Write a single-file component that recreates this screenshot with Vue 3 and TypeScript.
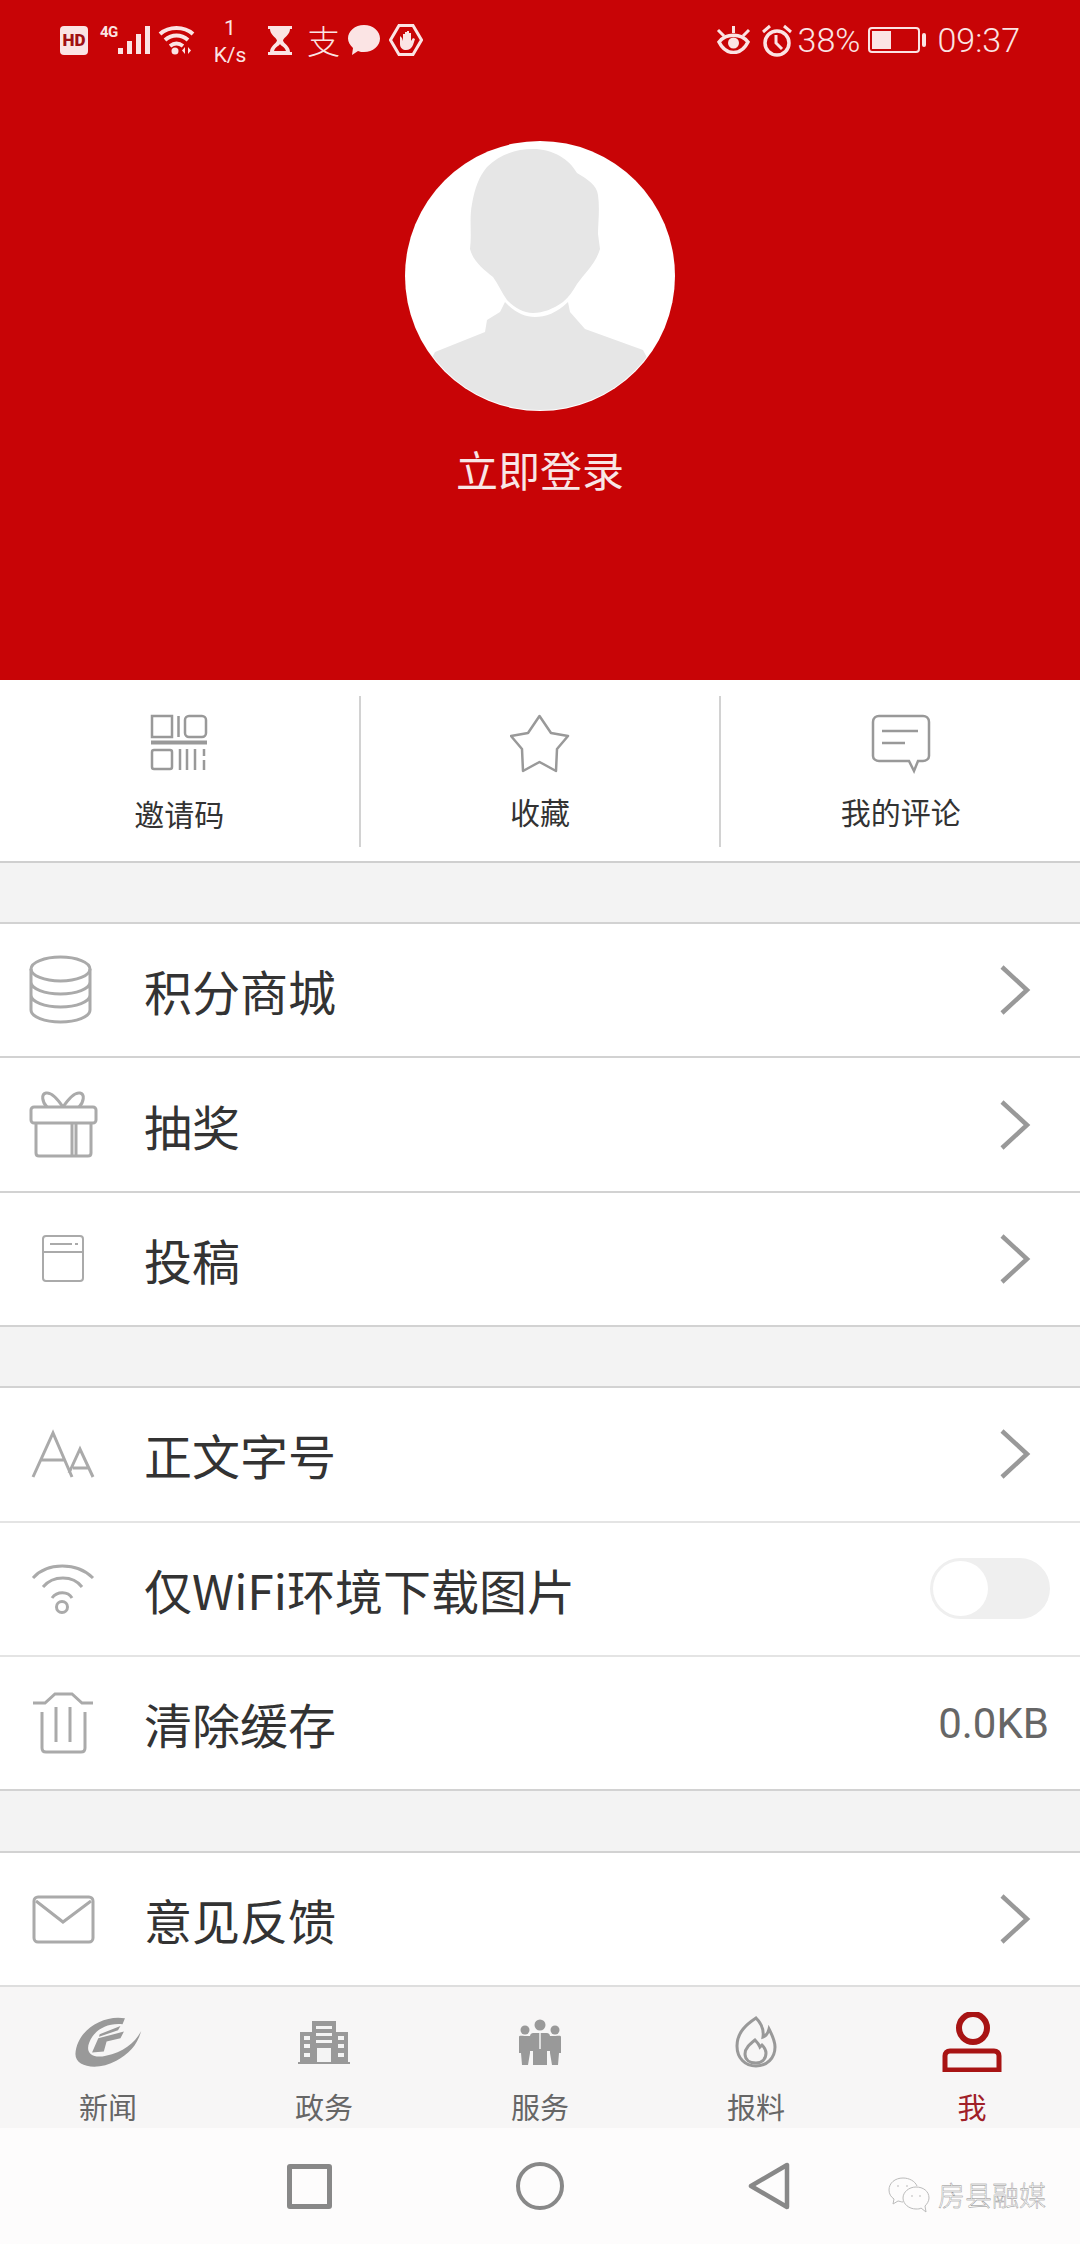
<script setup lang="ts">
import { ref } from "vue";

interface IRow {
    icon: string;
    label: string;
    value?: string;
    toggle?: boolean;
}

const wifiOnly = ref(false);

const quickLinks = [
    { icon: "qr", label: "邀请码", nudge: true },
    { icon: "star", label: "收藏", nudge: false },
    { icon: "comment", label: "我的评论", nudge: false },
];

const groups: IRow[][] = [
    [
        { icon: "coins", label: "积分商城" },
        { icon: "gift", label: "抽奖" },
        { icon: "draft", label: "投稿" },
    ],
    [
        { icon: "font", label: "正文字号" },
        { icon: "wifi", label: "仅WiFi环境下载图片", toggle: true },
        { icon: "trash", label: "清除缓存", value: "0.0KB" },
    ],
    [{ icon: "mail", label: "意见反馈" }],
];

const tabs = [
    { icon: "news", label: "新闻" },
    { icon: "gov", label: "政务" },
    { icon: "service", label: "服务" },
    { icon: "report", label: "报料" },
    { icon: "me", label: "我" },
];
</script>

<template>
    <div class="page">
        <header class="hero">
            <div class="status">
                <div class="status-left">
                    <span class="hd">HD</span>
                    <span class="net">4G</span>
                    <svg class="signal" width="33" height="28" viewBox="0 0 33 28">
                        <rect x="0" y="22" width="5" height="6" />
                        <rect x="9" y="15" width="5" height="13" />
                        <rect x="18" y="8" width="5" height="20" />
                        <rect x="27" y="0" width="5" height="28" />
                    </svg>
                    <svg class="wifi-mini" width="37" height="30" viewBox="0 0 37 30">
                        <path d="M2 9C11 1 26 1 35 9M7 15c7-6 16-6 23 0M12 21c4-3 9-3 13 0" fill="none" stroke="currentColor" stroke-width="4" />
                        <circle cx="17" cy="26" r="3.500" fill="currentColor" />
                        <path d="M27 22v7l-3-3.500zM30 22v7l3-3.500z" fill="currentColor" />
                    </svg>
                    <span class="speed"><span>1</span><span>K/s</span></span>
                    <svg class="glass" width="24" height="29" viewBox="0 0 24 29">
                        <path d="M0 0h24v3h-2c0 6-6 8-7 11.500 1 3.500 7 5.500 7 11.500h2v3H0v-3h2c0-6 6-8 7-11.500C8 11 2 9 2 3H0z" fill="currentColor" />
                        <path d="M6 25c1-4 5-5 6-7 1 2 5 3 6 7z" fill="#c80406" />
                    </svg>
                    <span class="alipay">支</span>
                    <svg class="bubble" width="32" height="30" viewBox="0 0 32 30">
                        <path d="M16 0c9 0 16 6 16 13.500S25 27 16 27c-2 0-4 0-6-1l-6 4 1-7C2 20 0 17 0 13.500 0 6 7 0 16 0z" fill="currentColor" />
                    </svg>
                    <svg class="hand" width="34" height="32" viewBox="0 0 34 32">
                        <path d="M10 1.500h14L32.500 16 24 30.500H10L1.500 16z" fill="none" stroke="currentColor" stroke-width="3" />
                        <path d="M11 12v8c0 4 3 6 6 6s6-2 7-5l2-6-2-1-2 3V9h-2v6-8h-2v8-7h-2v9-7h-2v7l-1-3z" fill="currentColor" />
                    </svg>
                </div>
                <div class="status-right">
                    <svg class="eye" width="35" height="28" viewBox="0 0 35 28">
                        <path d="M3 16c7-9 22-9 29 0-7 14-22 14-29 0z" fill="none" stroke="currentColor" stroke-width="3.500" />
                        <circle cx="17.500" cy="17" r="5.500" fill="currentColor" />
                        <path d="M2 4l6 6M33 4l-6 6M17.500 0v7" stroke="currentColor" stroke-width="3" />
                    </svg>
                    <svg class="alarm" width="32" height="33" viewBox="0 0 32 33">
                        <circle cx="16" cy="19" r="12" fill="none" stroke="currentColor" stroke-width="3.500" />
                        <path d="M15 11v8l6 6M2 8l7-6M30 8l-7-6" fill="none" stroke="currentColor" stroke-width="3" />
                    </svg>
                    <span class="pct">38%</span>
                    <span class="battery"><span class="battery-fill"></span></span>
                    <span class="battery-nub"></span>
                    <span class="clock">09:37</span>
                </div>
            </div>
            <svg class="avatar" width="270" height="270" viewBox="0 0 270 270">
                <defs>
                    <clipPath id="avatar-clip"><circle cx="135" cy="135" r="134" /></clipPath>
                </defs>
                <circle cx="135" cy="135" r="135" fill="#fff" />
                <g clip-path="url(#avatar-clip)" fill="#e6e6e6">
                    <path d="M128 8C148 8 164 18 172 32C182 38 192 44 193 54C195 68 193 82 193 93L195 108C191 122 180 132 172 143C168 150 164 156 158 161C148 168 138 172 128 172C118 172 109 166 102 159C97 152 93 143 88 136C78 128 68 120 65 108C67 92 64 78 67 63C70 46 74 36 82 26C94 14 110 8 128 8Z" />
                    <path d="M100 161C110 172 120 176 130 176C140 176 152 172 163 161L165 171L180 188L238 209L270 270H0L30 211L80 191L82 179L95 171Z" />
                </g>
            </svg>
            <div class="login">立即登录</div>
        </header>

        <section class="quick">
            <div v-for="link in quickLinks" :key="link.icon" class="quick-item" :class="{ nudge: link.nudge }">
                <svg class="quick-icon" width="60" height="60" viewBox="0 0 60 60">
                    <template v-if="link.icon === 'qr'">
                        <rect x="3" y="2" width="20" height="21" />
                        <rect x="36" y="2" width="21" height="21" rx="4" />
                        <path d="M29.500 2v21" />
                        <path d="M2 28.500h56" stroke-width="4" />
                        <rect x="3" y="36" width="20" height="19" rx="2" />
                        <path d="M31 35v21M38 35v21M46 35v21M55 35v7M55 46v10" />
                    </template>
                    <path
                        v-else-if="link.icon === 'star'"
                        d="M29.500 2L41 19L58 22L47 35L46 57L29.500 48L13 57L12 35L1 22L18 19Z"
                        stroke-linejoin="round"
                    />
                    <template v-else>
                        <path d="M8 2H52C55 2 58 4 58 8V42C58 45 55 47 52 47H47L43 57L38 47H8C5 47 2 45 2 42V8C2 4 5 2 8 2Z" />
                        <path d="M11 17H47M11 29H34" />
                    </template>
                </svg>
                <span class="quick-label">{{ link.label }}</span>
            </div>
        </section>

        <section v-for="(group, i) in groups" :key="i" class="group" :class="{ soft: i === 1 }">
            <div v-for="row in group" :key="row.label" class="row">
                <svg class="row-icon" width="90" height="90" viewBox="0 0 90 90">
                    <template v-if="row.icon === 'coins'">
                        <ellipse cx="43.500" cy="24" rx="29.500" ry="12" />
                        <path d="M14 24V65C14 72 28 77 43.500 77S73 72 73 65V24M14 37C14 44 28 49 43.500 49S73 44 73 37M14 50C14 57 28 62 43.500 62S73 57 73 50" />
                    </template>
                    <template v-else-if="row.icon === 'gift'">
                        <rect x="14" y="27" width="65" height="16" rx="3" />
                        <path d="M19 43V73C19 75 20 76 22 76H71C73 76 74 75 74 73V43M55 43V76M59 43V76" />
                        <path d="M46 27C40 18 34 12 29 13C24 14 25 22 30 27M46 27C52 18 58 12 63 13C68 14 67 22 62 27" />
                    </template>
                    <template v-else-if="row.icon === 'draft'">
                        <rect x="26" y="22" width="40" height="45" rx="3" stroke-width="2" />
                        <path d="M26 38H66M33 30H55M58 30H61" stroke-width="2" />
                    </template>
                    <template v-else-if="row.icon === 'font'">
                        <path d="M16 68L36 24L55 68M24 51H47M52 64L63 40L76 68M56 59H71" />
                    </template>
                    <template v-else-if="row.icon === 'wifi'">
                        <path d="M16 34C30 18 60 18 76 34M26 43C36 31 56 31 65 43M35 54C40 47 51 47 55 54" />
                        <circle cx="45" cy="63" r="5.500" />
                    </template>
                    <template v-else-if="row.icon === 'trash'">
                        <path d="M16 25H28L38 16H55L65 25H76" />
                        <path d="M25 34V70C25 73 27 74 29 74H64C66 74 68 73 68 70V34M39 29V64M53 29V64" />
                    </template>
                    <template v-else>
                        <rect x="17" y="23" width="59" height="45" rx="4" />
                        <path d="M19 27L46 48L74 27" />
                    </template>
                </svg>
                <span class="row-label">{{ row.label }}</span>
                <button
                    v-if="row.toggle"
                    class="toggle"
                    :class="{ on: wifiOnly }"
                    type="button"
                    @click="wifiOnly = !wifiOnly"
                >
                    <span class="knob"></span>
                </button>
                <span v-else-if="row.value" class="row-value">{{ row.value }}</span>
                <svg v-else class="chevron" width="34" height="52" viewBox="0 0 34 52">
                    <path d="M4 3L29 26L4 49" />
                </svg>
            </div>
        </section>

        <nav class="tabs">
            <div v-for="tab in tabs" :key="tab.icon" class="tab" :class="{ active: tab.icon === 'me' }">
                <div class="tab-icon">
                    <svg v-if="tab.icon === 'news'" width="71" height="53" viewBox="215 105 205 160" preserveAspectRatio="none">
                        <path d="M365 112C300 100 225 150 222 220C222 262 290 270 340 240C375 220 400 195 412 150C395 185 360 215 310 225C270 235 250 215 262 185C275 150 310 125 358 130Z" fill="#999" />
                        <path d="M270 215L288 172L362 152L352 172L312 182L304 212ZM292 160L352 135L345 148L290 168Z" fill="#999" />
                    </svg>
                    <svg v-else-if="tab.icon === 'gov'" width="52" height="44" viewBox="0 0 52 44">
                        <path d="M2 42V12H14V1H38V12H50V42H52V44H0V42Z" fill="#999" />
                        <path d="M18 6H34V9H18ZM18 13H34V16H18ZM18 20H34V23H18ZM19 28H33V42H19ZM6 16H12V20H6ZM40 16H46V20H40ZM6 24H12V28H6ZM40 24H46V28H40ZM6 33H12V37H6ZM40 33H46V37H40Z" fill="#f4f4f4" />
                    </svg>
                    <svg v-else-if="tab.icon === 'service'" width="44" height="46" viewBox="0 0 44 46" fill="#999">
                        <circle cx="7" cy="11" r="4.500" />
                        <circle cx="22" cy="6" r="5.500" />
                        <circle cx="37" cy="11" r="4.500" />
                        <path d="M1 18C1 16 3 17 12 17V34L10 46H4L3 34H1ZM15 14H29C30 14 32 15 32 17V32H29V46H15V32H12V17C12 15 14 14 15 14ZM32 17C41 17 43 16 43 18V34H41L40 46H34L32 34Z" />
                        <path d="M22 14V30" stroke="#f4f4f4" stroke-width="1.500" />
                    </svg>
                    <svg v-else-if="tab.icon === 'report'" width="42" height="52" viewBox="0 0 42 52" fill="none" stroke="#999" stroke-width="3">
                        <path d="M21 2C12 8 2 16 2 30C2 42 10 50 21 50C32 50 40 42 40 31C40 24 37 19 34 13C33 17 31 20 28 21C29 14 26 7 21 2Z" />
                        <path d="M20 24C15 28 10 32 10 38C10 44 15 47 21 47C27 47 31 43 31 37C31 33 29 31 27 29L25 31C24 28 22 26 20 24Z" />
                    </svg>
                    <svg v-else width="60" height="60" viewBox="0 0 60 60" fill="none" stroke="#a81414">
                        <circle cx="31" cy="16" r="14" stroke-width="6" />
                        <path d="M3 58V44C3 41 5 39 8 39H52C55 39 57 41 57 44V58Z" stroke-width="5" />
                    </svg>
                </div>
                <span class="tab-label">{{ tab.label }}</span>
            </div>
        </nav>

        <div class="system-nav">
            <span class="nav-square"></span>
            <span class="nav-circle"></span>
            <svg class="nav-back" width="42" height="48" viewBox="0 0 42 48">
                <path d="M39 3V45L3 24Z" fill="none" stroke="#888" stroke-width="4.500" stroke-linejoin="round" />
            </svg>
            <div class="watermark">
                <svg width="42" height="36" viewBox="0 0 42 36" fill="none" stroke="#bbb" stroke-width="1">
                    <path d="M29 9C27 4 21 1 15 1C7 1 1 6 1 13C1 17 3 20 6 22L5 27L10 24C11 24 13 25 15 25" />
                    <path d="M41 21C41 14 35 10 28 10C21 10 15 15 15 21C15 27 21 32 28 32C30 32 32 32 33 31L38 35L37 29C39 27 41 24 41 21Z" />
                    <path d="M10 8v2M19 8v2M24 18v2M32 18v2" />
                </svg>
                <span>房县融媒</span>
            </div>
        </div>
    </div>
</template>

<style scoped>
.page {
    position: relative;
    width: 1080px;
    height: 2244px;
    overflow: hidden;
    background: #f3f3f3;
    font-family: "Noto Sans CJK SC", Roboto, sans-serif;
}

.hero {
    height: 680px;
    box-sizing: border-box;
    background: #c80406;
    color: #fbe4e4;
    display: flex;
    flex-direction: column;
    align-items: center;
}

.status {
    align-self: stretch;
    height: 80px;
    display: flex;
    justify-content: space-between;
    align-items: center;
    padding: 0 60px;
    font-family: Roboto, sans-serif;
}

.status-left,
.status-right {
    display: flex;
    align-items: center;
}

.status svg {
    flex: none;
    color: #fbe4e4;
}

.hd {
    width: 28px;
    height: 29px;
    border-radius: 4px;
    background: #fbe4e4;
    color: #a01012;
    font-size: 17px;
    font-weight: 900;
    line-height: 29px;
    text-align: center;
}

.net {
    width: 17px;
    margin: -16px 0 0 12px;
    font-size: 15px;
    font-weight: 700;
    letter-spacing: -0.500px;
}

.signal {
    fill: #fbe4e4;
    margin-left: 1px;
}

.wifi-mini {
    margin-left: 7px;
}

.speed {
    width: 36px;
    margin-left: 17px;
    display: flex;
    flex-direction: column;
    align-items: center;
    font-size: 21px;
    line-height: 27px;
    margin-top: 3px;
}

.glass {
    margin-left: 20px;
}

.alipay {
    width: 34px;
    margin-left: 15px;
    font-family: "Noto Sans CJK SC", sans-serif;
    font-size: 33px;
    font-weight: 300;
    line-height: 36px;
}

.bubble {
    margin-left: 7px;
}

.hand {
    margin-left: 9px;
}

.alarm {
    margin-left: 10px;
}

.pct {
    margin-left: 5px;
    font-size: 34px;
    font-weight: 300;
}

.battery {
    width: 52px;
    height: 26px;
    margin-left: 8px;
    box-sizing: border-box;
    border: 2px solid #fbe4e4;
    border-radius: 4px;
    padding: 2px;
    display: flex;
}

.battery-fill {
    width: 19px;
    background: #fbe4e4;
}

.battery-nub {
    width: 4px;
    height: 14px;
    margin-left: 2px;
    background: #fbe4e4;
    border-radius: 2px;
}

.clock {
    margin-left: 11px;
    font-size: 34px;
    font-weight: 300;
}

.avatar {
    margin-top: 61px;
}

.login {
    margin-top: 30px;
    font-size: 42px;
    line-height: 56px;
    color: #f8e6e6;
}

.quick {
    height: 183px;
    box-sizing: border-box;
    background: #fff;
    border-bottom: 2px solid #cfcfcf;
    padding-top: 16px;
    display: flex;
    align-items: flex-start;
}

.quick-item {
    flex: 1;
    height: 151px;
    box-sizing: border-box;
    padding-top: 18px;
    border-right: 2px solid #d2d2d2;
    display: flex;
    flex-direction: column;
    align-items: center;
}

.quick-item:last-child {
    border-right: 0;
}

.quick-icon {
    fill: none;
    stroke: #999;
    stroke-width: 2.500;
}

.quick-label {
    margin-top: 17px;
    font-size: 30px;
    line-height: 40px;
    color: #333;
}

.nudge .quick-label {
    margin-top: 19px;
}

.group {
    margin-top: 59px;
    background: #fff;
    border-top: 2px solid #d2d2d2;
}

.row {
    height: 134.400px;
    box-sizing: border-box;
    padding: 0 22px 0 17px;
    border-bottom: 2px solid #d2d2d2;
    display: flex;
    align-items: center;
}

.soft .row {
    border-bottom-color: #e4e4e4;
}

.soft .row:last-child {
    border-bottom-color: #d2d2d2;
}

.group:last-of-type {
    margin-top: 60px;
}

.group:last-of-type .row {
    height: 132px;
    border-bottom: 0;
}

.row-icon {
    flex: none;
    fill: none;
    stroke: #aaa;
    stroke-width: 3;
}

.row-label {
    flex: 1;
    margin-left: 37px;
    font-size: 48px;
    line-height: 60px;
    color: #333;
}

.row-value {
    margin-right: 9px;
    font-family: Roboto, sans-serif;
    font-size: 42px;
    color: #666;
}

.chevron {
    margin-right: 26px;
    fill: none;
    stroke: #999;
    stroke-width: 4.500;
}

.toggle {
    width: 120px;
    height: 61px;
    padding: 3px;
    border: 0;
    border-radius: 31px;
    background: #efefef;
    display: flex;
    justify-content: flex-start;
    margin-right: 8px;
}

.knob {
    width: 55px;
    height: 55px;
    border-radius: 50%;
    background: #fff;
}

.tabs {
    height: 143px;
    box-sizing: border-box;
    background: #f7f6f6;
    border-top: 2px solid #dedede;
    padding-top: 25px;
    display: flex;
}

.tab {
    flex: 1;
    display: flex;
    flex-direction: column;
    align-items: center;
}

.tab-icon {
    height: 60px;
    display: flex;
    align-items: center;
    justify-content: center;
}

.tab-label {
    margin-top: 16px;
    font-size: 29px;
    line-height: 36px;
    color: #666;
}

.active .tab-label {
    color: #a02028;
}

.system-nav {
    position: relative;
    height: 116px;
    background: #fdfcfc;
    display: flex;
    align-items: center;
    gap: 184px;
    padding-left: 287px;
}

.nav-square {
    width: 45px;
    height: 45px;
    box-sizing: border-box;
    border: 5px solid #888;
    border-radius: 3px;
}

.nav-circle {
    width: 48px;
    height: 48px;
    box-sizing: border-box;
    border: 4.500px solid #888;
    border-radius: 50%;
}

.watermark {
    position: absolute;
    left: 888px;
    top: 49px;
    display: flex;
    align-items: center;
    gap: 8px;
}

.watermark span {
    font-size: 27px;
    font-weight: 300;
    line-height: 36px;
    color: #fff;
    -webkit-text-stroke: 0.400px #888;
}
</style>

<style>
html,
body {
    margin: 0;
    background: #f3f3f3;
}
</style>
